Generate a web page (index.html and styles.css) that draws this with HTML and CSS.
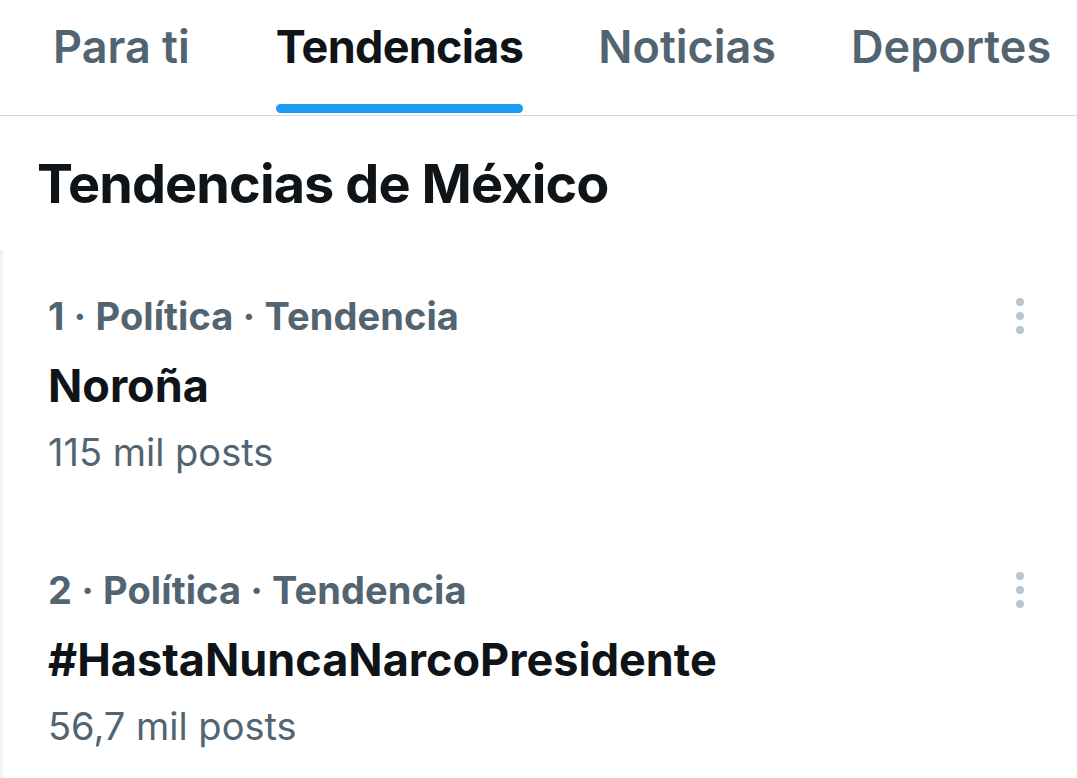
FILE: index.html
```html
<!DOCTYPE html>
<html lang="es">
<head>
<meta charset="utf-8">
<title>Tendencias</title>
<link rel="stylesheet" href="styles.css">
</head>
<body>
<nav class="tabs">
  <div class="tab tab-first"><span class="tab-label">Para ti</span></div>
  <div class="tab active tab-second"><span class="tab-label">Tendencias</span><span class="tab-bar"></span></div>
  <div class="tab tab-third"><span class="tab-label">Noticias</span></div>
  <div class="tab tab-fourth"><span class="tab-label">Deportes</span></div>
</nav>
<h1 class="heading">Tendencias de México</h1>
<section class="list">
  <article class="trend">
    <div class="trend-head">
      <span class="meta">1 · Política · Tendencia</span>
      <svg class="more" width="8" height="36" viewBox="0 0 8 36"><circle cx="4" cy="4" r="4"/><circle cx="4" cy="18" r="4"/><circle cx="4" cy="32" r="4"/></svg>
    </div>
    <div class="title">Noroña</div>
    <div class="count">115 mil posts</div>
  </article>
  <article class="trend">
    <div class="trend-head">
      <span class="meta">2 · Política · Tendencia</span>
      <svg class="more" width="8" height="36" viewBox="0 0 8 36"><circle cx="4" cy="4" r="4"/><circle cx="4" cy="18" r="4"/><circle cx="4" cy="32" r="4"/></svg>
    </div>
    <div class="title">#HastaNuncaNarcoPresidente</div>
    <div class="count">56,7 mil posts</div>
  </article>
</section>
</body>
</html>
```
FILE: styles.css
```css
* { box-sizing: border-box; }
html, body { margin: 0; padding: 0; background: #ffffff; }
body {
  width: 1077px;
  height: 778px;
  overflow: hidden;
  font-family: Inter, "Noto Sans", sans-serif;
  color: #0f1419;
}
.tabs {
  display: flex;
  align-items: flex-start;
  height: 116px;
  padding: 20px 0 0 53px;
  border-bottom: 1px solid #cfd9de;
}
.tab {
  display: flex;
  flex-direction: column;
  align-items: stretch;
}
.tab-second { margin-left: 86px; }
.tab-third { margin-left: 75px; }
.tab-fourth { margin-left: 75px; }
.tab-label {
  font-size: 45px;
  line-height: 54px;
  font-weight: 600;
  color: #536471;
  white-space: nowrap;
}
.tab.active .tab-label { font-weight: 700; color: #0f1419; letter-spacing: -0.7px; }
.tab-bar {
  display: block;
  height: 9px;
  margin-top: 30px;
  border-radius: 5px;
  background: #1d9bf0;
}
.heading {
  margin: 34px 0 0 37px;
  font-size: 54px;
  line-height: 68px;
  font-weight: 700;
  letter-spacing: -0.9px;
  color: #0f1419;
}
.list {
  margin-top: 32px;
  border-left: 3px solid #f0f3f4;
}
.trend {
  padding: 44px 53px 50px 45px;
}
.trend-head {
  display: flex;
  justify-content: space-between;
  align-items: center;
}
.meta {
  font-size: 38px;
  line-height: 44px;
  font-weight: 700;
  letter-spacing: 0.1px;
  color: #536471;
}
.more { fill: #b9c6cf; display: block; }
.title {
  margin-top: 23px;
  font-size: 45px;
  line-height: 50px;
  font-weight: 700;
  color: #0f1419;
}
.count {
  margin-top: 19px;
  font-size: 38px;
  line-height: 44px;
  font-weight: 400;
  color: #536471;
}
```
